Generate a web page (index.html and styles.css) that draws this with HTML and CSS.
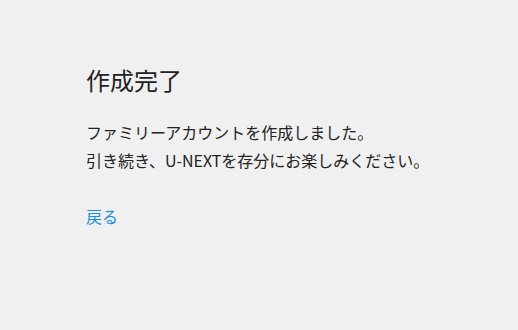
FILE: index.html
```html
<!DOCTYPE html>
<html lang="ja">
<head>
  <meta charset="UTF-8" />
  <title>作成完了</title>
  <link rel="stylesheet" href="styles.css">
</head>
<body>
  <div class="complete-container">
    <h1>作成完了</h1>
    <p class="message">ファミリーアカウントを作成しました。<br>引き続き、U-NEXTを存分にお楽しみください。</p>
    <a href="#" class="back-link">戻る</a>
  </div>
</body>
</html>
```

FILE: styles.css
```css
body {
  font-family: "Noto Sans CJK JP", "Noto Sans", sans-serif;
  background: #f0f0f0;
  color: #222;
  margin: 0;
  padding: 0;
}

.complete-container {
  padding: 60px 86px;
}

h1 {
  font-size: 24px;
  font-weight: normal;
  line-height: 40px;
  margin: 0 0 18px;
}

.message {
  font-size: 16px;
  line-height: 28px;
  margin: 0 0 28px;
}

.back-link {
  font-size: 16px;
  line-height: 28px;
  color: #1a8fe0;
  text-decoration: none;
}
```
